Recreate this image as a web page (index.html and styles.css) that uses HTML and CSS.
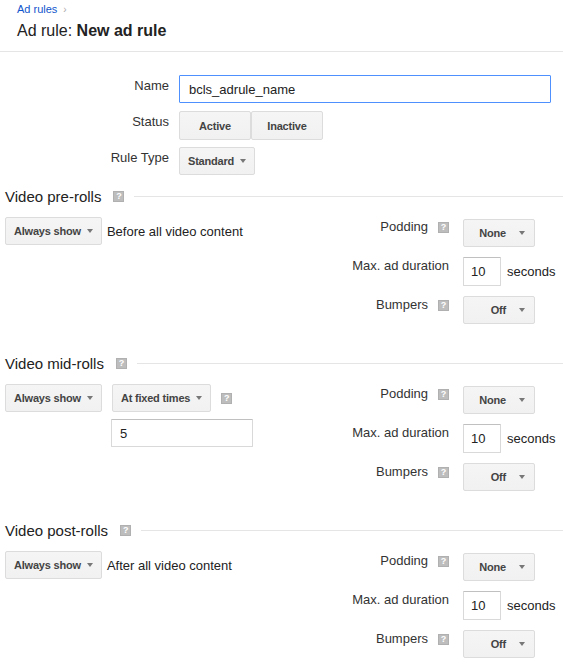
FILE: index.html
```html
<!DOCTYPE html>
<html>
<head>
<meta charset="utf-8">
<link rel="stylesheet" href="styles.css">
</head>
<body>
<div class="header">
  <div class="crumbs"><a class="crumb" href="#">Ad rules</a><span class="chev">›</span></div>
  <h1 class="title">Ad rule: <b>New ad rule</b></h1>
</div>

<div class="form">
  <div class="lbl">Name</div>
  <div class="ctl"><input class="txt name-input" type="text" value="bcls_adrule_name"></div>
  <div class="lbl">Status</div>
  <div class="ctl toggle"><span class="btn">Active</span><span class="btn">Inactive</span></div>
  <div class="lbl">Rule Type</div>
  <div class="ctl"><span class="dd">Standard<i class="arrow"></i></span></div>
</div>

<div class="section">
  <div class="section-head"><span>Video pre-rolls</span><span class="help">?</span><span class="rule"></span></div>
  <div class="section-body">
    <div class="left">
      <div class="row"><span class="dd">Always show<i class="arrow"></i></span><span class="desc">Before all video content</span></div>
    </div>
    <div class="right">
      <div class="rlbl">Podding<span class="help">?</span></div>
      <div class="rctl"><span class="dd dd-fixed">None<i class="arrow"></i></span></div>
      <div class="rlbl pad1">Max. ad duration</div>
      <div class="rctl"><input class="txt dur" type="text" value="10"><span class="unit">seconds</span></div>
      <div class="rlbl pad1">Bumpers<span class="help">?</span></div>
      <div class="rctl"><span class="dd dd-fixed">Off<i class="arrow"></i></span></div>
    </div>
  </div>
</div>

<div class="section">
  <div class="section-head"><span>Video mid-rolls</span><span class="help">?</span><span class="rule"></span></div>
  <div class="section-body">
    <div class="left">
      <div class="row gap10"><span class="dd">Always show<i class="arrow"></i></span><span class="dd">At fixed times<i class="arrow"></i></span><span class="help">?</span></div>
      <div class="row indent"><input class="txt times" type="text" value="5"></div>
    </div>
    <div class="right">
      <div class="rlbl">Podding<span class="help">?</span></div>
      <div class="rctl"><span class="dd dd-fixed">None<i class="arrow"></i></span></div>
      <div class="rlbl pad1">Max. ad duration</div>
      <div class="rctl"><input class="txt dur" type="text" value="10"><span class="unit">seconds</span></div>
      <div class="rlbl pad1">Bumpers<span class="help">?</span></div>
      <div class="rctl"><span class="dd dd-fixed">Off<i class="arrow"></i></span></div>
    </div>
  </div>
</div>

<div class="section">
  <div class="section-head"><span>Video post-rolls</span><span class="help">?</span><span class="rule"></span></div>
  <div class="section-body">
    <div class="left">
      <div class="row"><span class="dd">Always show<i class="arrow"></i></span><span class="desc">After all video content</span></div>
    </div>
    <div class="right">
      <div class="rlbl">Podding<span class="help">?</span></div>
      <div class="rctl"><span class="dd dd-fixed">None<i class="arrow"></i></span></div>
      <div class="rlbl pad1">Max. ad duration</div>
      <div class="rctl"><input class="txt dur" type="text" value="10"><span class="unit">seconds</span></div>
      <div class="rlbl pad1">Bumpers<span class="help">?</span></div>
      <div class="rctl"><span class="dd dd-fixed">Off<i class="arrow"></i></span></div>
    </div>
  </div>
</div>
</body>
</html>
```

FILE: styles.css
```css
* { box-sizing: border-box; }
html, body { margin: 0; padding: 0; background: #fff; }
body {
  font-family: "Liberation Sans", Arial, sans-serif;
  font-size: 13px;
  color: #333;
  width: 563px;
  overflow: hidden;
}

.header {
  padding: 3px 0 10px 17px;
  border-bottom: 1px solid #e5e5e5;
}
.crumbs { height: 13px; line-height: 13px; font-size: 11px; }
.crumb { color: #15c; text-decoration: none; }
.chev { color: #aaa; margin-left: 6px; font-size: 10px; }
.title {
  margin: 5px 0 0 0;
  font-size: 16px;
  line-height: 20px;
  font-weight: normal;
  color: #222;
}
.title b { font-weight: bold; }

.form {
  display: grid;
  grid-template-columns: 169px 372px;
  column-gap: 10px;
  row-gap: 8px;
  padding-top: 23px;
}
.lbl {
  text-align: right;
  line-height: 16px;
  padding-top: 3px;
  color: #333;
}
.ctl { height: 28px; display: flex; }

.txt {
  font-family: "Liberation Sans", Arial, sans-serif;
  font-size: 13px;
  color: #222;
  height: 28px;
  border: 1px solid #d9d9d9;
  border-top-color: #c0c0c0;
  border-radius: 1px;
  padding: 0 8px;
  margin: 0;
  outline: none;
  background: #fff;
}
.name-input {
  width: 372px;
  border-color: #4d90fe;
  padding-left: 9px;
}

.btn, .dd {
  display: inline-flex;
  align-items: center;
  height: 28px;
  border: 1px solid #dcdcdc;
  border-radius: 2px;
  background: linear-gradient(#f5f5f5, #f1f1f1);
  font-size: 11px;
  font-weight: bold;
  color: #444;
  white-space: nowrap;
  letter-spacing: -0.2px;
}
.toggle .btn {
  width: 72px;
  height: 29px;
  justify-content: center;
}
.dd { padding: 0 8px; gap: 6px; }
.arrow {
  display: inline-block;
  width: 0;
  height: 0;
  border-left: 3.5px solid transparent;
  border-right: 3.5px solid transparent;
  border-top: 4px solid #777;
}
.dd-fixed {
  width: 72px;
  padding: 0 9px 0 8px;
  justify-content: flex-end;
  gap: 13px;
}

.help {
  display: inline-flex;
  align-items: center;
  justify-content: center;
  width: 11px;
  height: 11px;
  background: #bdbdbd;
  border: 1px solid #b0b0b0;
  color: #fff;
  font-size: 9px;
  font-weight: bold;
  line-height: 9px;
  flex: none;
}

.form + .section { margin-top: 12px; }
.section + .section { margin-top: 30px; }
.section-head {
  display: flex;
  align-items: center;
  height: 18px;
  padding-left: 5px;
  font-size: 15px;
  color: #222;
}
.section-head .help { margin-left: 12px; }
.rule {
  flex: 1;
  margin-left: 10px;
  border-top: 1px solid #e5e5e5;
}

.section-body {
  display: flex;
  margin-top: 12px;
  padding-left: 5px;
}
.left { flex: 1; display: flex; flex-direction: column; gap: 7px; }
.row { display: flex; align-items: center; gap: 5px; color: #222; }
.row.gap10 { gap: 10px; }
.row.indent { padding-left: 106px; }
.desc { color: #222; }
.times { width: 142px; }

.right {
  display: grid;
  grid-template-columns: auto 100px;
  column-gap: 14px;
  row-gap: 10px;
  padding-top: 2px;
  align-items: start;
}
.rlbl {
  display: flex;
  justify-content: flex-end;
  align-items: center;
  gap: 10px;
  line-height: 16px;
  color: #333;
}
.rlbl.pad1 { padding-top: 1px; }
.rctl { display: flex; align-items: center; gap: 6px; }
.dur { width: 38px; height: 29px; padding: 0 7px; }
.unit { color: #222; }
```
